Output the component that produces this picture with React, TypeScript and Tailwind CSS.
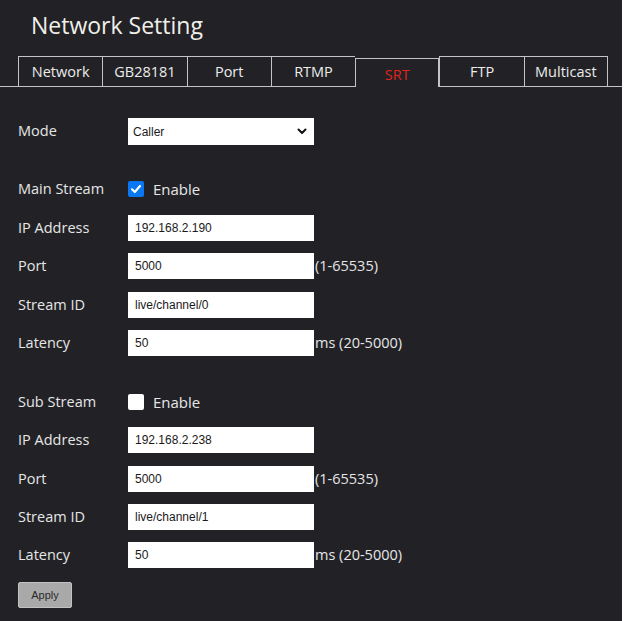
import React from "react";

const tabs = ["Network", "GB28181", "Port", "RTMP", "SRT", "FTP", "Multicast"];

function Field({ label, value, suffix }: { label: string; value: string; suffix?: string }) {
  return (
    <div className="flex h-[26px] items-center">
      <span className="w-[110px] shrink-0 text-[14.5px] text-[#e6e6e6]">{label}</span>
      <input
        readOnly
        value={value}
        className="h-[26px] w-[186px] bg-white pl-[7px] text-[12px] text-[#1a1a1a] outline-none"
        style={{ fontFamily: '"Liberation Sans", Arial, sans-serif' }}
      />
      {suffix && <span className="ml-[1px] text-[14.5px] text-[#e6e6e6]">{suffix}</span>}
    </div>
  );
}

function Check({ label, checked }: { label: string; checked: boolean }) {
  return (
    <div className="flex h-[26px] items-center">
      <span className="w-[110px] shrink-0 text-[14.5px] text-[#e6e6e6]">{label}</span>
      {checked ? (
        <span className="flex h-[16px] w-[16px] items-center justify-center rounded-[2px] bg-[#0a78f2]">
          <svg width="12" height="12" viewBox="0 0 12 12" fill="none">
            <path d="M2 6.3 4.8 9 10 3" stroke="white" strokeWidth="2.2" strokeLinecap="round" strokeLinejoin="round" />
          </svg>
        </span>
      ) : (
        <span className="h-[16px] w-[16px] rounded-[2px] bg-white" />
      )}
      <span className="ml-[9px] text-[15px] text-[#e6e6e6]">Enable</span>
    </div>
  );
}

export default function App() {
  return (
    <div className="min-h-[621px] w-[624px] bg-white">
      <div
        className="min-h-[621px] w-[622px] bg-[#222226]"
        style={{ fontFamily: '"Open Sans", "Noto Sans", sans-serif' }}
      >
        <div className="h-[56px] pl-[31px] pt-[9px] text-[23px] leading-[32px] text-[#f0efe9]">
          Network Setting
        </div>

        <div className="border-b border-[#c4c4c4]">
          <div className="ml-[18px] grid h-[30px] w-[590px] grid-cols-7">
            {tabs.map((t, i) => {
              const active = t === "SRT";
              return (
                <div
                  key={t}
                  className={
                    active
                      ? "relative -mb-[1px] mt-[2px] flex items-center justify-center border-l border-r border-t border-[#c4c4c4] bg-[#222226] pt-[3px] text-[14.5px] text-[#e0231c]"
                      : "flex items-center justify-center border-l border-t border-[#c4c4c4] text-[14.5px] text-[#ececec]" +
                        (i === tabs.length - 1 ? " border-r" : "")
                  }
                >
                  {t}
                </div>
              );
            })}
          </div>
        </div>

        <div className="flex flex-col px-[18px] pb-[13px] pt-[31px]">
          <div className="flex h-[26px] items-center">
            <span className="w-[110px] shrink-0 text-[14.5px] text-[#e6e6e6]">Mode</span>
            <div className="relative h-[26px] w-[186px] bg-white">
              <select
                className="h-[26px] w-full appearance-none bg-white pl-[5px] text-[12px] text-[#1a1a1a] outline-none"
                style={{ fontFamily: '"Liberation Sans", Arial, sans-serif' }}
                defaultValue="Caller"
              >
                <option>Caller</option>
                <option>Listener</option>
              </select>
              <svg
                className="pointer-events-none absolute right-[7px] top-[10px]"
                width="10"
                height="7"
                viewBox="0 0 10 7"
                fill="none"
              >
                <path d="M1.5 1.5 5 5 8.5 1.5" stroke="#111" strokeWidth="2" strokeLinecap="round" strokeLinejoin="round" />
              </svg>
            </div>
          </div>

          <div className="mt-[32px] flex flex-col gap-[12.5px]">
            <Check label="Main Stream" checked />
            <Field label="IP Address" value="192.168.2.190" />
            <Field label="Port" value="5000" suffix="(1-65535)" />
            <Field label="Stream ID" value="live/channel/0" />
            <Field label="Latency" value="50" suffix="ms (20-5000)" />
          </div>

          <div className="mt-[33px] flex flex-col gap-[12.3px]">
            <Check label="Sub Stream" checked={false} />
            <Field label="IP Address" value="192.168.2.238" />
            <Field label="Port" value="5000" suffix="(1-65535)" />
            <Field label="Stream ID" value="live/channel/1" />
            <Field label="Latency" value="50" suffix="ms (20-5000)" />
          </div>

          <div className="mt-[13px]">
            <button
              className="h-[26px] w-[54px] rounded-[2px] border border-[#c2c2c2] bg-[#a9a9a9] text-[11px] text-[#2a2a2a]"
              style={{ fontFamily: '"Liberation Sans", Arial, sans-serif' }}
            >
              Apply
            </button>
          </div>
        </div>
      </div>
    </div>
  );
}
